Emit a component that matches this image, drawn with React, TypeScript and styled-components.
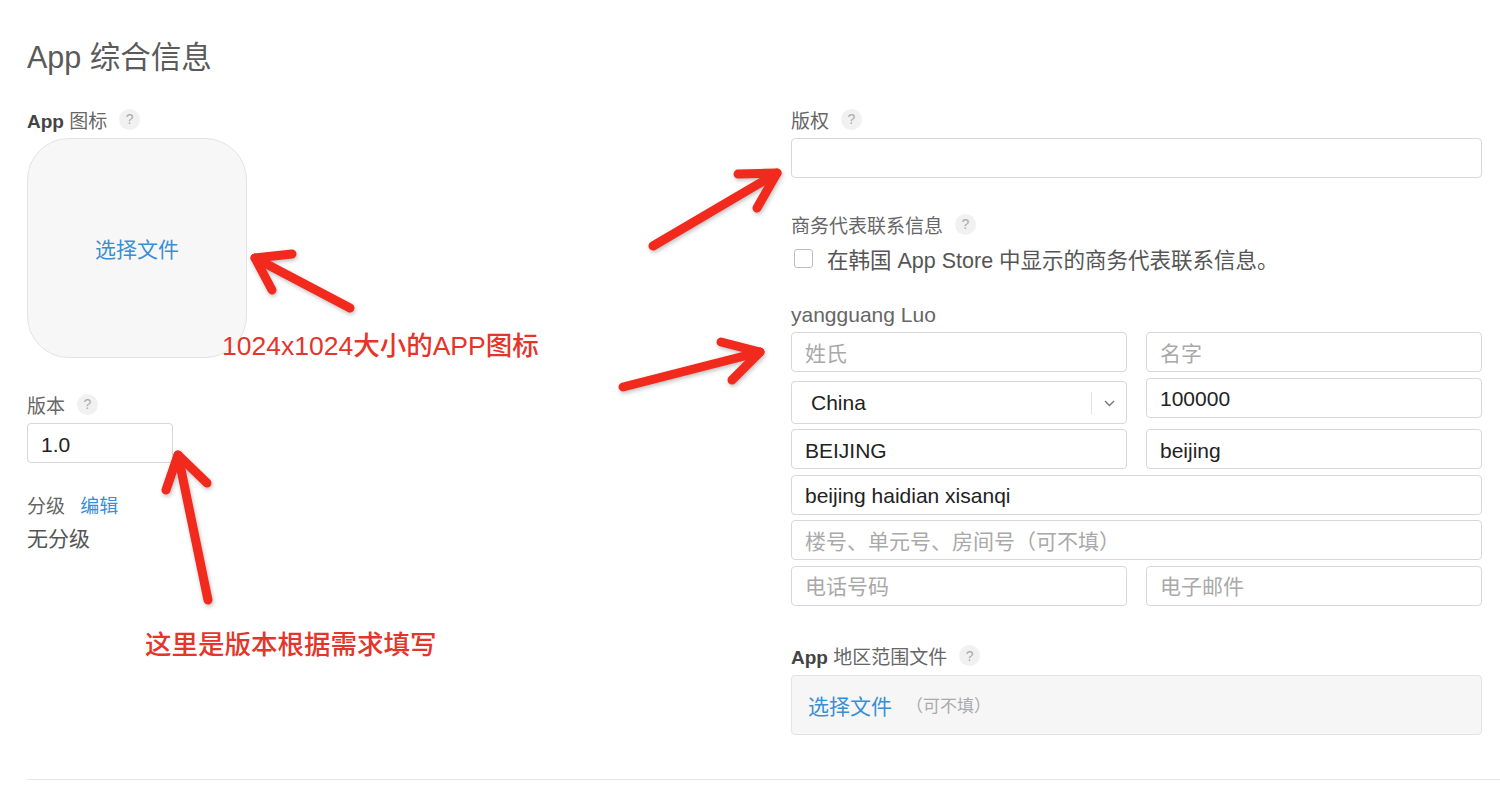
import React from "react";
import styled, { createGlobalStyle } from "styled-components";

const Global = createGlobalStyle`
  html, body { margin: 0; padding: 0; background: #fff; }
  body {
    font-family: "Liberation Sans", "Noto Sans CJK SC", sans-serif;
    color: #666;
  }
  * { box-sizing: border-box; }
`;

const Page = styled.div`
  position: relative;
  width: 1500px;
  height: 800px;
  overflow: hidden;
  padding-top: 37px;
`;

const Title = styled.h1`
  margin: 0 0 30px 27px;
  font-family: "Liberation Sans", "Noto Sans CJK SC", sans-serif;
  font-size: 30.5px;
  line-height: 40px;
  font-weight: 400;
  color: #5a5a5a;
`;

const Columns = styled.div`
  display: grid;
  grid-template-columns: 764px 691px;
  padding-left: 27px;
`;

const Column = styled.div`
  display: flex;
  flex-direction: column;
  align-items: flex-start;
`;

const Label = styled.div<{ $mt?: number; $mb?: number; $size?: number }>`
  display: flex;
  align-items: center;
  gap: 10px;
  height: 24px;
  margin-top: ${(p) => p.$mt ?? 0}px;
  margin-bottom: ${(p) => p.$mb ?? 7}px;
  font-size: ${(p) => p.$size ?? 19}px;
  color: #666;
  white-space: nowrap;
`;

const Strong = styled.span`
  font-weight: 700;
  color: #444;
`;

const HelpDot = styled.span`
  display: inline-flex;
  align-items: center;
  justify-content: center;
  width: 21px;
  height: 21px;
  border-radius: 50%;
  background: #f1f1f1;
  color: #aaa;
  font-size: 14px;
  margin-left: 2px;
`;

const IconDrop = styled.div`
  width: 220px;
  height: 220px;
  border: 1px solid #e3e3e3;
  border-radius: 42px;
  background: #f7f7f7;
  display: flex;
  align-items: center;
  justify-content: center;
  color: #3a8fd4;
  font-size: 21px;
`;

const TextField = styled.input<{ $w?: string; $h?: number }>`
  display: block;
  width: ${(p) => p.$w ?? "100%"};
  height: ${(p) => p.$h ?? 40}px;
  margin: 0;
  padding: 3px 13px 0;
  border: 1px solid #d8d8d8;
  border-radius: 4px;
  background: #fff;
  font-family: "Liberation Sans", "Noto Sans CJK SC", sans-serif;
  font-size: 21px;
  color: #222;
  outline: none;
  &::placeholder { color: #a9a9a9; }
`;

const Link = styled.span`
  color: #3a8fd4;
`;

const RatingValue = styled.div`
  margin-top: 1px;
  font-size: 21px;
  line-height: 30px;
  color: #555;
`;

const CheckRow = styled.label`
  display: flex;
  align-items: center;
  gap: 14px;
  height: 28px;
  margin-top: 1px;
  padding-left: 3px;
  font-size: 21.5px;
  color: #555;
  white-space: nowrap;
`;

const Box = styled.span`
  width: 19px;
  height: 19px;
  border: 1px solid #bdbdbd;
  border-radius: 3px;
  background: #fff;
`;

const AddressGrid = styled.div`
  display: grid;
  width: 100%;
  grid-template-columns: 336px 336px;
  column-gap: 19px;
  row-gap: 5.6px;
  align-items: start;
`;

const Wide = styled.div`
  grid-column: 1 / span 2;
`;

const SelectBox = styled.div`
  display: flex;
  align-items: center;
  height: 43px;
  margin-top: 3px;
  padding-top: 2px;
  border: 1px solid #d8d8d8;
  border-radius: 4px;
  background: #fff;
  font-size: 21px;
  color: #222;
`;

const SelectValue = styled.span`
  flex: 1;
  padding-left: 19px;
`;

const SelectDivider = styled.span`
  width: 1px;
  height: 22px;
  background: #e2e2e2;
`;

const Chevron = styled.span`
  display: flex;
  align-items: center;
  justify-content: center;
  width: 34px;
`;

const FileBox = styled.div`
  display: flex;
  align-items: center;
  gap: 14px;
  width: 100%;
  height: 60px;
  padding: 0 16px;
  border: 1px solid #e3e3e3;
  border-radius: 4px;
  background: #f6f6f6;
  font-size: 21px;
  color: #3a8fd4;
`;

const Optional = styled.span`
  font-size: 17px;
  color: #aaa;
`;

const Divider = styled.hr`
  margin: 44px 0 0 27px;
  border: 0;
  border-top: 1px solid #e6e6e6;
`;

const Overlay = styled.div`
  position: absolute;
  inset: 0;
  pointer-events: none;
`;

const ArrowSvg = styled.svg`
  position: absolute;
  left: 0;
  top: 0;
  filter: drop-shadow(1px 2px 2px rgba(0, 0, 0, 0.25));
`;

const Note = styled.div<{ $x: number; $y: number }>`
  position: absolute;
  left: ${(p) => p.$x}px;
  top: ${(p) => p.$y}px;
  font-family: "Liberation Sans", "Noto Sans CJK SC", sans-serif;
  font-size: 26.5px;
  line-height: 30px;
  font-weight: 500;
  color: #e5352b;
  white-space: nowrap;
`;

type Arrow = { tail: [number, number]; tip: [number, number]; w1: [number, number]; w2: [number, number] };

const arrows: Arrow[] = [
  { tail: [350, 308], tip: [255, 258], w1: [292, 254], w2: [272, 290] },
  { tail: [653, 246], tip: [777, 173], w1: [738, 174], w2: [757, 208] },
  { tail: [623, 387], tip: [760, 352], w1: [721, 342], w2: [732, 380] },
  { tail: [208, 600], tip: [178, 455], w1: [166, 490], w2: [207, 483] },
];

const Help = () => <HelpDot>?</HelpDot>;

export default function App() {
  return (
    <Page>
      <Global />
      <Title>App 综合信息</Title>
      <Columns>
        <Column>
          <Label>
            <span>
              <Strong>App</Strong> 图标
            </span>
            <Help />
          </Label>
          <IconDrop>选择文件</IconDrop>

          <Label $mt={34}>
            <span>版本</span>
            <Help />
          </Label>
          <TextField $w="146px" readOnly defaultValue="1.0" />

          <Label $mt={29}>
            <span>分级</span>
            <Link>&nbsp;编辑</Link>
          </Label>
          <RatingValue>无分级</RatingValue>
        </Column>

        <Column>
          <Label>
            <span>版权</span>
            <Help />
          </Label>
          <TextField readOnly defaultValue="" />

          <Label $mt={34}>
            <span>商务代表联系信息</span>
            <Help />
          </Label>
          <CheckRow>
            <Box />
            在韩国 App Store 中显示的商务代表联系信息。
          </CheckRow>

          <Label $mt={31} $mb={5} $size={21}>
            <span>yangguang Luo</span>
          </Label>
          <AddressGrid>
            <TextField readOnly placeholder="姓氏" />
            <TextField readOnly placeholder="名字" />
            <SelectBox>
              <SelectValue>China</SelectValue>
              <SelectDivider />
              <Chevron>
                <svg width="11" height="7" viewBox="0 0 11 7">
                  <path d="M1 1l4.5 4.5L10 1" fill="none" stroke="#777" strokeWidth="1.4" />
                </svg>
              </Chevron>
            </SelectBox>
            <TextField readOnly defaultValue="100000" />
            <TextField readOnly defaultValue="BEIJING" />
            <TextField readOnly defaultValue="beijing" />
            <Wide>
              <TextField readOnly defaultValue="beijing haidian xisanqi" />
            </Wide>
            <Wide>
              <TextField readOnly placeholder="楼号、单元号、房间号（可不填）" />
            </Wide>
            <TextField readOnly placeholder="电话号码" />
            <TextField readOnly placeholder="电子邮件" />
          </AddressGrid>

          <Label $mt={38}>
            <span>
              <Strong>App</Strong> 地区范围文件
            </span>
            <Help />
          </Label>
          <FileBox>
            <span>选择文件</span>
            <Optional>（可不填）</Optional>
          </FileBox>
        </Column>
      </Columns>
      <Divider />

      <Overlay>
        <ArrowSvg width="1500" height="800" viewBox="0 0 1500 800">
          {arrows.map((a, i) => (
            <g key={i} fill="none" stroke="#f2291d" strokeWidth="9" strokeLinecap="round" strokeLinejoin="round">
              <line x1={a.tail[0]} y1={a.tail[1]} x2={a.tip[0]} y2={a.tip[1]} />
              <polyline points={`${a.w1[0]},${a.w1[1]} ${a.tip[0]},${a.tip[1]} ${a.w2[0]},${a.w2[1]}`} />
            </g>
          ))}
        </ArrowSvg>
        <Note $x={222} $y={331}>1024x1024大小的APP图标</Note>
        <Note $x={145} $y={630}>这里是版本根据需求填写</Note>
      </Overlay>
    </Page>
  );
}
